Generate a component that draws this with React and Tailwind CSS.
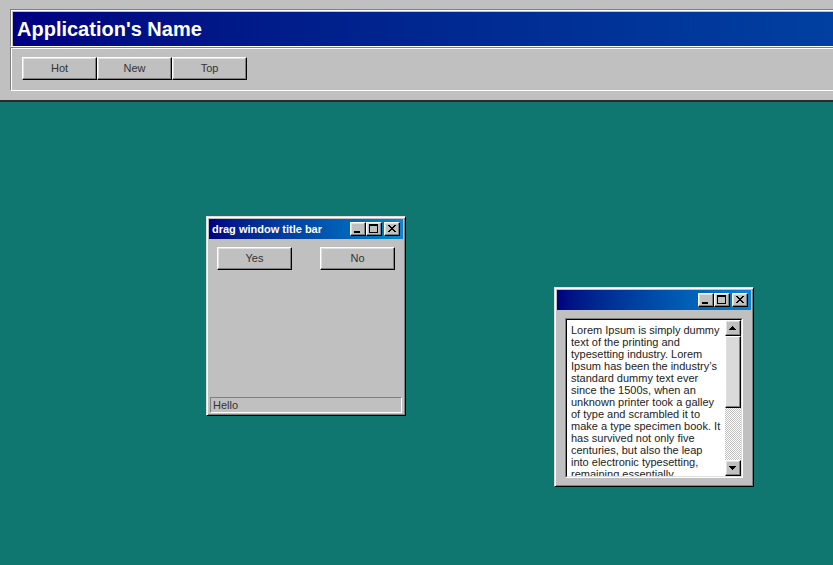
import React from 'react';

// classic 3d edges
const raised =
  "border border-t-white border-l-white border-r-black border-b-black shadow-[inset_-1px_-1px_0_#808080,inset_1px_1px_0_#dfdfdf]";

const MinIcon = () => (
  <svg className="absolute left-[-1px] top-[-1px]" width="16" height="14" viewBox="0 0 16 14" shapeRendering="crispEdges">
    <rect x="4" y="9" width="6" height="2" fill="#000" />
  </svg>
);

const MaxIcon = () => (
  <svg className="absolute left-[-1px] top-[-1px]" width="16" height="14" viewBox="0 0 16 14" shapeRendering="crispEdges">
    <rect x="3" y="2" width="9" height="2" fill="#000" />
    <rect x="3" y="4" width="1" height="6" fill="#000" />
    <rect x="11" y="4" width="1" height="6" fill="#000" />
    <rect x="3" y="10" width="9" height="1" fill="#000" />
  </svg>
);

const CloseIcon = () => (
  <svg className="absolute left-[-1px] top-[-1px]" width="16" height="14" viewBox="0 0 16 14" shapeRendering="crispEdges">
    <rect x="4" y="3" width="2" height="1" fill="#000" />
    <rect x="10" y="3" width="2" height="1" fill="#000" />
    <rect x="5" y="4" width="2" height="1" fill="#000" />
    <rect x="9" y="4" width="2" height="1" fill="#000" />
    <rect x="6" y="5" width="4" height="1" fill="#000" />
    <rect x="7" y="6" width="2" height="1" fill="#000" />
    <rect x="6" y="7" width="4" height="1" fill="#000" />
    <rect x="5" y="8" width="2" height="1" fill="#000" />
    <rect x="9" y="8" width="2" height="1" fill="#000" />
    <rect x="4" y="9" width="2" height="1" fill="#000" />
    <rect x="10" y="9" width="2" height="1" fill="#000" />
  </svg>
);

const TitleButton = ({ children, className = "" }) => (
  <button className={`relative w-[16px] h-[14px] bg-[#c0c0c0] ${raised} ${className}`}>
    {children}
  </button>
);

const Window = ({ className, title, children }) => (
  <div
    className={`absolute w-[200px] h-[200px] bg-[#c0c0c0] border border-t-[#dfdfdf] border-l-[#dfdfdf] border-r-black border-b-black shadow-[inset_1px_1px_0_#fff,inset_-1px_-1px_0_#808080] p-[2px] flex flex-col ${className}`}
  >
    <div className="h-[20px] shrink-0 bg-linear-to-r from-[#000080] to-[#1084d0] flex items-center justify-between pl-[3px] pr-[3px]">
      <span className="text-[11px] font-bold text-white leading-none">{title}</span>
      <div className="flex items-center">
        <TitleButton><MinIcon /></TitleButton>
        <TitleButton><MaxIcon /></TitleButton>
        <TitleButton className="ml-[2px]"><CloseIcon /></TitleButton>
      </div>
    </div>
    {children}
  </div>
);

const ArrowButton = ({ up }) => (
  <div className={`relative w-[16px] h-[16px] shrink-0 bg-[#c0c0c0] ${raised}`}>
    <svg className="absolute left-[-1px] top-[-1px]" width="16" height="16" viewBox="0 0 16 16" shapeRendering="crispEdges">
      {up ? (
        <>
          <rect x="7" y="6" width="1" height="1" fill="#000" />
          <rect x="6" y="7" width="3" height="1" fill="#000" />
          <rect x="5" y="8" width="5" height="1" fill="#000" />
          <rect x="4" y="9" width="7" height="1" fill="#000" />
        </>
      ) : (
        <>
          <rect x="4" y="6" width="7" height="1" fill="#000" />
          <rect x="5" y="7" width="5" height="1" fill="#000" />
          <rect x="6" y="8" width="3" height="1" fill="#000" />
          <rect x="7" y="9" width="1" height="1" fill="#000" />
        </>
      )}
    </svg>
  </div>
);

const lorem =
  "Lorem Ipsum is simply dummy text of the printing and typesetting industry. Lorem Ipsum has been the industry\u2019s standard dummy text ever since the 1500s, when an unknown printer took a galley of type and scrambled it to make a type specimen book. It has survived not only five centuries, but also the leap into electronic typesetting, remaining essentially unchanged.";

export default function App() {
  const tabs = ["Hot", "New", "Top"];

  return (
    <div className="relative min-h-screen bg-[#0f776f] overflow-hidden font-['Liberation_Sans',Arial,sans-serif]">
      {/* app header */}
      <header className="h-[102px] bg-[#c0c0c0] border-b-2 border-[#2a2a2a] pt-[9px] pl-[10px]">
        <div className="border-t border-l border-b border-t-[#808080] border-l-[#808080] border-b-white shadow-[inset_1px_1px_0_#fff] pt-[2px] pl-[2px]">
          <div className="h-[34px] bg-linear-to-r from-[#000080] to-[#0040a0] flex items-center pl-[4px] pb-[1px] text-white font-bold text-[20px] leading-none">
            Application's Name
          </div>
        </div>
        <div className="flex border-t border-l border-b border-t-[#808080] border-l-[#808080] border-b-white shadow-[inset_1px_1px_0_#fff] pt-[9px] pb-[10px] pl-[11px]">
          {tabs.map((t) => (
            <button
              key={t}
              className={`w-[75px] h-[23px] bg-[#c0c0c0] text-[11px] text-[#333] leading-none ${raised}`}
            >
              {t}
            </button>
          ))}
        </div>
      </header>

      {/* dialog window */}
      <Window className="left-[206px] top-[216px]" title="drag window title bar">
        <div className="flex-1 flex flex-col">
          <div className="flex justify-between px-[8px] pt-[8px]">
            <button className={`w-[75px] h-[23px] bg-[#c0c0c0] text-[11px] text-[#333] leading-none ${raised}`}>Yes</button>
            <button className={`w-[75px] h-[23px] bg-[#c0c0c0] text-[11px] text-[#333] leading-none ${raised}`}>No</button>
          </div>
          <div className="flex-1" />
          <div className="mx-[1px] h-[16px] border border-t-[#808080] border-l-[#808080] border-r-white border-b-white pl-[2px] text-[11px] leading-[14px] text-[#333]">
            Hello
          </div>
        </div>
      </Window>

      {/* text window */}
      <Window className="left-[554px] top-[287px]" title="">
        <div className="flex-1 flex px-[8px] pt-[8px] pb-[6px] min-h-0">
          <div className="flex-1 flex border border-t-[#808080] border-l-[#808080] border-r-white border-b-white min-h-0">
            <div className="flex-1 flex border border-t-black border-l-black border-r-[#dfdfdf] border-b-[#dfdfdf] min-h-0">
              <div className="w-[158px] bg-white pl-[4px] pr-[3px] pt-[4px] overflow-hidden text-[11px] leading-[12px] text-[#222]">
                {lorem}
              </div>
              <div className="w-[16px] flex flex-col">
                <ArrowButton up />
                <div className={`h-[72px] shrink-0 bg-[#dadada] ${raised}`} />
                <div className="flex-1 bg-[repeating-conic-gradient(#c0c0c0_0%_25%,#ffffff_0%_50%)] bg-size-[2px_2px]" />
                <ArrowButton />
              </div>
            </div>
          </div>
        </div>
      </Window>
    </div>
  );
}
